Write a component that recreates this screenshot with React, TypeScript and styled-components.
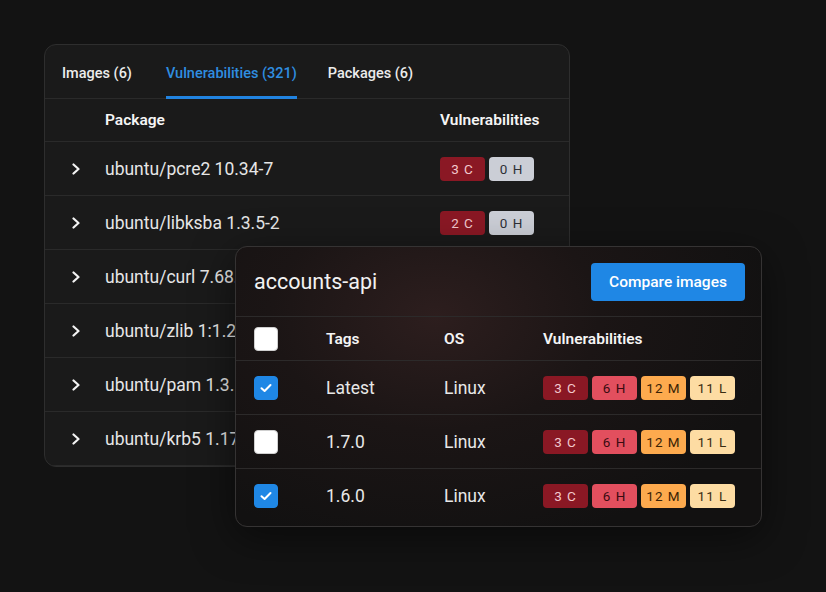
import styled, { createGlobalStyle, css } from 'styled-components';

const GlobalStyle = createGlobalStyle`
  html, body {
    margin: 0;
    padding: 0;
    background: #131313;
  }
  body {
    font-family: Roboto, 'Liberation Sans', sans-serif;
    color: #f2f2f2;
    -webkit-font-smoothing: antialiased;
  }
`;

const Stage = styled.div`
  position: relative;
  width: 826px;
  height: 592px;
  box-sizing: border-box;
  padding: 44px 0 0 44px;
  overflow: hidden;
`;

const BackCard = styled.div`
  width: 526px;
  height: 423px;
  box-sizing: border-box;
  background: #1a1a1a;
  border: 1px solid #2e2e2e;
  border-radius: 12px;
  overflow: hidden;
`;

const TabBar = styled.div`
  display: flex;
  align-items: stretch;
  gap: 31px;
  height: 53px;
  padding-left: 17px;
  border-bottom: 1px solid #2a2a2a;
`;

const Tab = styled.div<{ $active?: boolean }>`
  position: relative;
  display: flex;
  align-items: center;
  padding-top: 3px;
  font-size: 14.5px;
  font-weight: 500;
  color: ${(p) => (p.$active ? '#2f8ee0' : '#ececec')};

  &:nth-child(2) {
    margin-left: 3px;
  }

  ${(p) =>
    p.$active &&
    css`
      &::after {
        content: '';
        position: absolute;
        left: 0;
        right: 0;
        bottom: -1px;
        height: 3px;
        background: #2183e0;
      }
    `}
`;

const PkgRow = styled.div<{ $head?: boolean }>`
  display: grid;
  grid-template-columns: 34px 335px 1fr;
  align-items: center;
  height: ${(p) => (p.$head ? '42px' : '53px')};
  padding-left: 26px;
  border-bottom: 1px solid #2a2a2a;
  font-size: ${(p) => (p.$head ? '15.5px' : '17.5px')};
  font-weight: ${(p) => (p.$head ? 600 : 400)};
  color: ${(p) => (p.$head ? '#f5f5f5' : '#e6e6e6')};
  white-space: nowrap;
`;

const Chevron = styled.svg`
  display: block;
  width: 10px;
  height: 12px;
`;

const BadgeGroup = styled.div`
  display: flex;
  gap: 4px;
`;

type Level = 'c' | 'h' | 'm' | 'l' | 'none';

const badgeColors: Record<Level, [string, string]> = {
  c: ['#8a1824', '#f2c9cd'],
  h: ['#e24f5e', '#3a0b11'],
  m: ['#fdaa4e', '#3a2205'],
  l: ['#fddca3', '#3a2c12'],
  none: ['#cbced6', '#2e3036'],
};

const Badge = styled.span<{ $level: Level }>`
  display: inline-flex;
  align-items: center;
  justify-content: center;
  width: 45px;
  height: 24px;
  border-radius: 4px;
  font-size: 13.5px;
  font-weight: 400;
  letter-spacing: 1px;
  background: ${(p) => badgeColors[p.$level][0]};
  color: ${(p) => badgeColors[p.$level][1]};
`;

const FrontCard = styled.div`
  position: absolute;
  left: 235px;
  top: 246px;
  width: 527px;
  height: 281px;
  box-sizing: border-box;
  border: 1px solid #353333;
  border-radius: 12px;
  overflow: hidden;
  background: radial-gradient(ellipse 65% 85% at 38% 25%, #2d1e1e 0%, #1b1515 48%, #121111 100%);
  box-shadow: 0 10px 40px rgba(0, 0, 0, 0.5);
`;

const FrontHeader = styled.div`
  display: flex;
  align-items: center;
  justify-content: space-between;
  height: 69px;
  padding: 0 16px 0 18px;
  border-bottom: 1px solid #2c2a2a;
`;

const Title = styled.h2`
  margin: 0;
  font-size: 21.5px;
  font-weight: 400;
  color: #f2f2f2;
`;

const CompareButton = styled.button`
  width: 154px;
  height: 38px;
  border: none;
  border-radius: 4px;
  background: #1f87e5;
  color: #fff;
  font-family: inherit;
  font-size: 15.5px;
  font-weight: 500;
  cursor: pointer;
`;

const ImageRow = styled.div<{ $head?: boolean; $last?: boolean }>`
  display: grid;
  grid-template-columns: 72px 118px 99px 1fr;
  align-items: center;
  height: ${(p) => (p.$head ? '43px' : '53px')};
  padding-left: 18px;
  border-bottom: ${(p) => (p.$last ? 'none' : '1px solid #2c2a2a')};
  font-size: ${(p) => (p.$head ? '15.5px' : '17.5px')};
  font-weight: ${(p) => (p.$head ? 600 : 400)};
  color: ${(p) => (p.$head ? '#f5f5f5' : '#e8e8e8')};
`;

const Check = styled.span<{ $on?: boolean }>`
  display: flex;
  align-items: center;
  justify-content: center;
  width: 24px;
  height: 24px;
  box-sizing: border-box;
  border-radius: 4px;
  background: ${(p) => (p.$on ? '#1f87e5' : '#ffffff')};
  border: 1px solid ${(p) => (p.$on ? '#1f87e5' : '#cfcfcf')};
`;

const CheckMark = styled.svg`
  width: 14px;
  height: 14px;
`;

const packages = [
  { name: 'ubuntu/pcre2 10.34-7', c: 3, h: 0 },
  { name: 'ubuntu/libksba 1.3.5-2', c: 2, h: 0 },
  { name: 'ubuntu/curl 7.68.0-1', c: 2, h: 1 },
  { name: 'ubuntu/zlib 1:1.2.11', c: 1, h: 0 },
  { name: 'ubuntu/pam 1.3.1-5', c: 1, h: 0 },
  { name: 'ubuntu/krb5 1.17-6', c: 1, h: 0 },
];

const images = [
  { tag: 'Latest', os: 'Linux', on: true },
  { tag: '1.7.0', os: 'Linux', on: false },
  { tag: '1.6.0', os: 'Linux', on: true },
];

function ChevronIcon() {
  return (
    <Chevron viewBox="0 0 10 12">
      <path d="M2.5 1.5 L7.5 6 L2.5 10.5" fill="none" stroke="#f2f2f2" strokeWidth="2.2" strokeLinecap="round" strokeLinejoin="round" />
    </Chevron>
  );
}

function Checkbox({ on }: { on?: boolean }) {
  return (
    <Check $on={on}>
      {on && (
        <CheckMark viewBox="0 0 14 14">
          <path d="M2.5 7.2 L5.6 10 L11.5 4" fill="none" stroke="#fff" strokeWidth="2" strokeLinecap="round" strokeLinejoin="round" />
        </CheckMark>
      )}
    </Check>
  );
}

export default function App() {
  return (
    <>
      <GlobalStyle />
      <Stage>
        <BackCard>
          <TabBar>
            <Tab>Images (6)</Tab>
            <Tab $active>Vulnerabilities (321)</Tab>
            <Tab>Packages (6)</Tab>
          </TabBar>
          <PkgRow $head>
            <span />
            <span>Package</span>
            <span>Vulnerabilities</span>
          </PkgRow>
          {packages.map((p) => (
            <PkgRow key={p.name}>
              <ChevronIcon />
              <span>{p.name}</span>
              <BadgeGroup>
                <Badge $level="c">{p.c} C</Badge>
                <Badge $level={p.h ? 'h' : 'none'}>{p.h} H</Badge>
              </BadgeGroup>
            </PkgRow>
          ))}
        </BackCard>

        <FrontCard>
          <FrontHeader>
            <Title>accounts-api</Title>
            <CompareButton>Compare images</CompareButton>
          </FrontHeader>
          <ImageRow $head>
            <Checkbox />
            <span>Tags</span>
            <span>OS</span>
            <span>Vulnerabilities</span>
          </ImageRow>
          {images.map((img, i) => (
            <ImageRow key={img.tag} $last={i === images.length - 1}>
              <Checkbox on={img.on} />
              <span>{img.tag}</span>
              <span>{img.os}</span>
              <BadgeGroup>
                <Badge $level="c">3 C</Badge>
                <Badge $level="h">6 H</Badge>
                <Badge $level="m">12 M</Badge>
                <Badge $level="l">11 L</Badge>
              </BadgeGroup>
            </ImageRow>
          ))}
        </FrontCard>
      </Stage>
    </>
  );
}
